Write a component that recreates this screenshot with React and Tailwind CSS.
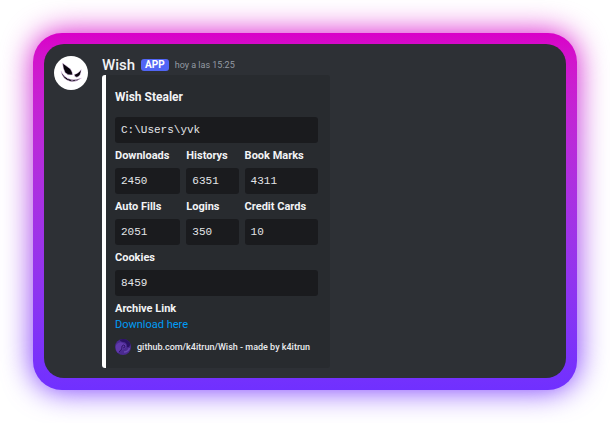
const stats = [
  [
    { label: 'Downloads', value: '2450' },
    { label: 'Historys', value: '6351' },
    { label: 'Book Marks', value: '4311' },
  ],
  [
    { label: 'Auto Fills', value: '2051' },
    { label: 'Logins', value: '350' },
    { label: 'Credit Cards', value: '10' },
  ],
];

function CodeBox({ children }) {
  return (
    <code className="block h-[26px] rounded-[3px] bg-[#1a1b1e] px-1.5 font-['Liberation_Mono',monospace] text-[11px] leading-[26px] text-[#e3e5e8]">
      {children}
    </code>
  );
}

function Field({ label, value }) {
  return (
    <div>
      <h3 className="mb-0.5 text-[11px] leading-5 font-bold whitespace-nowrap text-[#f2f3f5]">{label}</h3>
      <CodeBox>{value}</CodeBox>
    </div>
  );
}

function Avatar() {
  return (
    <svg viewBox="0 0 34 34" className="mt-0.5 size-[34px] shrink-0" aria-hidden="true">
      <circle cx="17" cy="17" r="17" fill="#fff" />
      <g stroke="#f0cffb" strokeWidth=".5" strokeLinejoin="round">
        <path d="M8.5 7 L16.5 13 Q18.8 16.5 18.6 18.8 Q14 20 11 16.5 Q9 13 8.5 7Z" fill="#09040d" />
        <path d="M27.2 13.5 Q27 20 23 21.2 Q20.5 21.5 20.2 18.6 Q24 17.8 27.2 13.5Z" fill="#09040d" />
        <path d="M7 15 Q9 20 13.5 22.3 Q19 25.2 27.5 22 Q22 26.6 16 25.3 Q8.3 23 7 15Z" fill="#09040d" />
      </g>
      <path d="M10 19.5l1.5 1M13 22l1.8 1M17 24.2l1.8.4M21 24.4l1.8-.3" stroke="#e9b8fa" strokeWidth=".6" />
    </svg>
  );
}

function FooterIcon() {
  return (
    <svg viewBox="0 0 16 16" className="size-4 shrink-0" aria-hidden="true">
      <circle cx="8" cy="8" r="8" fill="#4a2a90" />
      <path d="M8 0A8 8 0 0 1 15.5 5.5Q14 9 12 8Q12 3 8 3Q4 2 5 .6Q6.5 0 8 0Z" fill="#2b1265" />
      <path d="M1 6Q4 2 8 4Q12 5 11 8Q9 11 6 11L3 14Q0 11 1 6Z" fill="#6039ab" />
      <path d="M4 13Q8 10 7 7Q9 5 10 7Q10 9 8 9" fill="none" stroke="#2f1469" />
      <path d="M9 13Q13 13 14.5 9" fill="none" stroke="#6847b1" strokeWidth="1.5" />
    </svg>
  );
}

export default function App() {
  return (
    <main className="bg-white p-[33px] font-[Roboto,sans-serif]">
      <div className="relative isolate">
        <div className="absolute inset-0 -z-10 rounded-[29px] bg-linear-to-b from-[#d900c8] to-[#7030ff] blur-[15px]" />
        <div className="rounded-[29px] bg-linear-to-b from-[#d900c8] to-[#7030ff] p-[11px] pb-3">
          <article className="flex gap-3.5 rounded-[20px] bg-[#2d3035] p-2.5">
            <Avatar />
            <div>
              <header className="flex h-[21px] items-center gap-1.5">
                <h1 className="text-[15px] leading-5 font-medium text-[#f2f3f5]">Wish</h1>
                <span className="rounded-[3px] bg-[#5165f5] px-1 text-[10px] leading-3 font-bold text-white">APP</span>
                <time className="text-[9px] leading-4 text-[#949ba4]">hoy a las 15:25</time>
              </header>
              <section className="w-[228px] rounded-[3px] border-l-4 border-white bg-[#282b2f] py-[13px] pr-3 pl-[9px]">
                <h2 className="mb-[11px] text-xs leading-[18px] font-bold text-[#f2f3f5]">Wish Stealer</h2>
                <CodeBox>C:\Users\yvk</CodeBox>
                <div className="mt-[3px] flex flex-col gap-[3px]">
                  {stats.map((row) => (
                    <div key={row[0].label} className="grid grid-cols-[65fr_52fr_73fr] gap-x-1.5">
                      {row.map((item) => (
                        <Field key={item.label} {...item} />
                      ))}
                    </div>
                  ))}
                  <Field label="Cookies" value="8459" />
                  <div>
                    <h3 className="text-[11px] leading-5 font-bold text-[#f2f3f5]">Archive Link</h3>
                    <a href="#archive" className="block text-[11px] leading-3 text-[#009cf5]">Download here</a>
                  </div>
                </div>
                <footer className="mt-2 flex items-center gap-1.5 text-[9px] leading-4 font-medium whitespace-nowrap text-[#e8eaed]">
                  <FooterIcon />
                  github.com/k4itrun/Wish - made by k4itrun
                </footer>
              </section>
            </div>
          </article>
        </div>
      </div>
    </main>
  );
}
